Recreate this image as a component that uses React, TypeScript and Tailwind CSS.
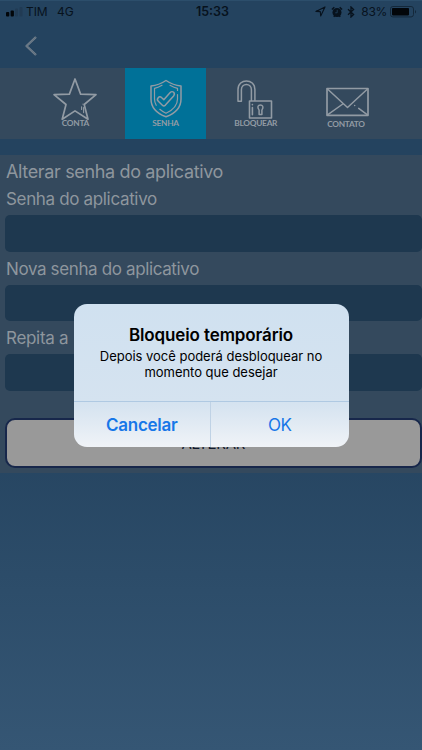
import React from "react";

const iconStroke = {
  fill: "none",
  stroke: "currentColor",
  strokeLinecap: "round",
  strokeLinejoin: "round",
} as const;

function StarIcon() {
  return (
    <svg viewBox="0 0 82 72" className="block h-[72px] w-[82px]">
      <g {...iconStroke} strokeWidth="1.7">
        <path d="M41 11 L46.6 26.1 L62 26.7 L50.2 36.5 L54 51.3 L41 42.9 L28.2 51.3 L32 36.5 L20 26.7 L35.4 26.1 Z" />
        <path d="M49 36v.3M47.6 38.8v2.6M49.6 39.6v5" strokeWidth="1.1" />
      </g>
    </svg>
  );
}

function ShieldIcon() {
  return (
    <svg viewBox="0 0 82 72" className="block h-[72px] w-[82px]">
      <g {...iconStroke} strokeWidth="1.5">
        <path d="M41 12.5 C36.5 15.5 31 17.5 26 17.9 V31 C26 39.5 32 45.5 41 48.8 C50 45.5 56 39.5 56 31 V17.9 C51 17.5 45.5 15.5 41 12.5 Z" />
        <path d="M37 17.3 C34.5 18.7 32 19.8 29.5 20.3 V31 C29.5 33.5 30.1 35.5 31.2 37.3" strokeWidth="1.2" />
        <path d="M45 17.3 C47.5 18.7 50 19.8 52.5 20.3 V22.5 M52.5 26.5 V31 C52.5 38 47 42.5 41 45.3 C38.7 44.2 36.6 42.9 34.8 41.3" strokeWidth="1.2" />
        <path d="M33.2 29.7 C31.7 31.5 32.3 32.4 33.3 33.3 L37.4 37.2 C38.4 38.2 39.4 38.1 40.4 37.1 L48.6 27.9 C50.8 25.3 47.6 22.1 45.2 24.5 L38.8 31.7 L36.5 29.5 C35.4 28.4 34.2 28.6 33.2 29.7 Z" />
      </g>
    </svg>
  );
}

function UnlockIcon() {
  return (
    <svg viewBox="0 0 82 72" className="block h-[72px] w-[82px]">
      <g {...iconStroke} strokeWidth="1.6">
        <path d="M34.5 33 H56.5 V50 H34.5 Z" />
        <path d="M23 33.3 V21.5 C23 10 39.9 10 39.9 21.5 V32.5 M26.4 33.3 V21.7 C26.4 14.7 36.4 14.7 36.4 21.7 V32.5 M23 33.3 H26.4" strokeWidth="1.5" />
        <path d="M44.1 42.1 C39 35.2 51.6 35.2 46.9 42.1 V46.4 H44.1 Z" strokeWidth="1.5" />
        <path d="M37.4 36.5v.2M37.4 39.5V46.7" />
      </g>
    </svg>
  );
}

function MailIcon() {
  return (
    <svg viewBox="0 0 82 72" className="block h-[72px] w-[82px]">
      <g {...iconStroke} strokeWidth="1.7">
        <path d="M22 20.5 H63 V47.3 H22 Z" />
        <path d="M22.5 21 L42.5 39.5 L62.5 21 M22.5 46.8 L37.8 36 M62.5 46.8 L53.7 40.4 M49.7 37.5v.1" strokeWidth="1.5" />
      </g>
    </svg>
  );
}

const tabs = [
  { label: "CONTA", Icon: StarIcon, pad: "pt-[49.5px]" },
  { label: "SENHA", Icon: ShieldIcon, pad: "pt-[49.5px]", active: true },
  { label: "BLOQUEAR", Icon: UnlockIcon, pad: "pt-[49px]" },
  { label: "CONTATO", Icon: MailIcon, pad: "pt-[50px]" },
];

function StatusBar() {
  return (
    <div className="grid h-[21px] grid-cols-[1fr_auto_1fr] items-center text-[12px] leading-[21px] text-[#07121d]">
      <div className="flex items-center pl-[6px]">
        <svg viewBox="0 0 17 10" className="h-[10px] w-[17px]">
          <rect x="0" y="5" width="3.3" height="4.6" rx="1" fill="#02060a" />
          <rect x="4.6" y="3.4" width="3.3" height="6.2" rx="1" fill="#02060a" />
          <rect x="9" y="1.5" width="3" height="8" rx="1" fill="#213b54" />
          <rect x="13.5" y="0" width="3" height="9.5" rx="1" fill="#213b54" />
        </svg>
        <span className="ml-[3px] w-[31px] tracking-[-0.1px]">TIM</span>
        <span>4G</span>
      </div>
      <div className="translate-x-[1.5px] text-[12.5px] font-semibold">15:33</div>
      <div className="flex items-center justify-end pr-[5px]">
        <svg viewBox="0 0 11 11" className="h-[11px] w-[11px]" fill="none" stroke="currentColor" strokeWidth="1.1" strokeLinejoin="round">
          <path d="M10 .9 L.9 5.4 L5.3 5.6 L5.7 10 Z" />
        </svg>
        <svg viewBox="0 0 12 12" className="ml-[5px] h-[12px] w-[12px]">
          <circle cx="6" cy="6.5" r="4.5" fill="currentColor" />
          <path d="M.9 3.6 L3.3 1.3 M8.7 1.3 L11.1 3.6 M2.7 10.8 L3.8 9.7 M9.3 10.8 L8.2 9.7" stroke="currentColor" strokeWidth="1.4" />
          <path d="M6.2 3.8 V6.8 H4.2" stroke="#23435f" strokeWidth=".8" fill="none" />
        </svg>
        <svg viewBox="0 0 8 12" className="ml-[4px] h-[12px] w-[8px]" fill="none" stroke="currentColor" strokeWidth="1.3">
          <path d="M1 3.2 L6.6 8.4 L4 11 V1 L6.6 3.6 L1 8.8" />
        </svg>
        <span className="ml-[6px] tracking-[-0.3px]">83%</span>
        <svg viewBox="0 0 27 12" className="ml-[3px] h-[12px] w-[27px]">
          <rect x=".5" y=".5" width="23" height="10.4" rx="2.4" fill="none" stroke="#14283a" />
          <rect x="2" y="2" width="17" height="7.4" rx=".8" fill="#02060a" />
          <path d="M25 4 C26.4 4.7 26.4 6.8 25 7.5 Z" fill="#14283a" />
        </svg>
      </div>
    </div>
  );
}

function Field({ label, track }: { label: string; track: string }) {
  return (
    <label className="flex h-[69.5px] flex-col">
      <span className={"h-[33px] pt-[4px] pl-px text-[17px] leading-[26px] whitespace-nowrap " + track}>{label}</span>
      <span className="block h-[36.5px] rounded-[5px] bg-[#1e384f]" />
    </label>
  );
}

export default function App() {
  return (
    <div className="relative flex h-[750px] w-[422px] flex-col overflow-hidden bg-linear-to-b from-[#24435f] from-55% to-[#355674] font-[Inter,'Liberation_Sans',sans-serif]">
      <div className="h-[67.5px] shrink-0 border-t border-[#2c4e6b]">
        <StatusBar />
        <div className="pt-[13px] pl-[24px]">
          <svg viewBox="0 0 14 22" className="h-[22px] w-[14px]" fill="none">
            <path d="M12 2 L2.5 11 L12 20" stroke="#75818c" strokeWidth="2.3" strokeLinejoin="round" />
            <path d="M12 2 L2.5 11 L12 20" stroke="#526679" strokeWidth=".6" />
          </svg>
        </div>
      </div>

      <nav className="flex h-[71.5px] shrink-0 gap-[8.6px] bg-[#34495d] pl-[34.4px] text-[#929ba4]">
        {tabs.map(({ label, Icon, pad, active }) => (
          <div key={label} className={"grid h-[71.5px] w-[81.6px] shrink-0 " + (active ? "bg-[#007198]" : "")}>
            <div className="col-start-1 row-start-1">
              <Icon />
            </div>
            <div className={"col-start-1 row-start-1 text-center font-[Lato,sans-serif] text-[8.3px] leading-[12px] font-bold tracking-[-0.27px] " + pad}>
              {label}
            </div>
          </div>
        ))}
      </nav>

      <main className="mt-[16px] h-[318px] shrink-0 bg-[#34495d] pl-[5px] text-[#8e969d]">
        <h1 className="h-[27px] pt-[3px] pl-px text-[18px] leading-[27px] tracking-[-0.35px] whitespace-nowrap">Alterar senha do aplicativo</h1>
        <Field label="Senha do aplicativo" track="tracking-[-0.34px]" />
        <Field label="Nova senha do aplicativo" track="tracking-[-0.37px]" />
        <Field label="Repita a" track="tracking-[-0.3px]" />
        <button className="mt-[27px] block h-[50.5px] w-[416.5px] rounded-[10px] border-2 border-[#17274b] bg-[#999999] pt-[2px] text-[15px] tracking-[-0.3px] text-[#111a2d]">
          ALTERAR
        </button>
      </main>

      <section role="dialog" className="absolute top-[304px] left-[73.5px] flex h-[142.5px] w-[275px] flex-col overflow-hidden rounded-[13px] bg-linear-to-b from-[#d0e1f0] from-0% via-[#d5e3f0] via-70% to-[#f0f3f7] text-center">
        <div className="h-[97px] pt-[20.6px] text-black">
          <h2 className="text-[17px] leading-[21px] font-semibold tracking-[-0.12px]">Bloqueio temporário</h2>
          <p className="mt-[2.6px] text-[13px] leading-[16px] tracking-[-0.02px]">
            Depois você poderá desbloquear no
            <br />
            momento que desejar
          </p>
        </div>
        <div className="grid h-[45.5px] grid-cols-2 border-t border-[#afc9e2] text-[17px] leading-[45px] text-[#1777e8]">
          <button className="border-r border-[#bfd2e5] pt-[0.5px] font-semibold tracking-[-0.25px]">Cancelar</button>
          <button className="pt-[0.5px] tracking-[-0.4px]">OK</button>
        </div>
      </section>
    </div>
  );
}
